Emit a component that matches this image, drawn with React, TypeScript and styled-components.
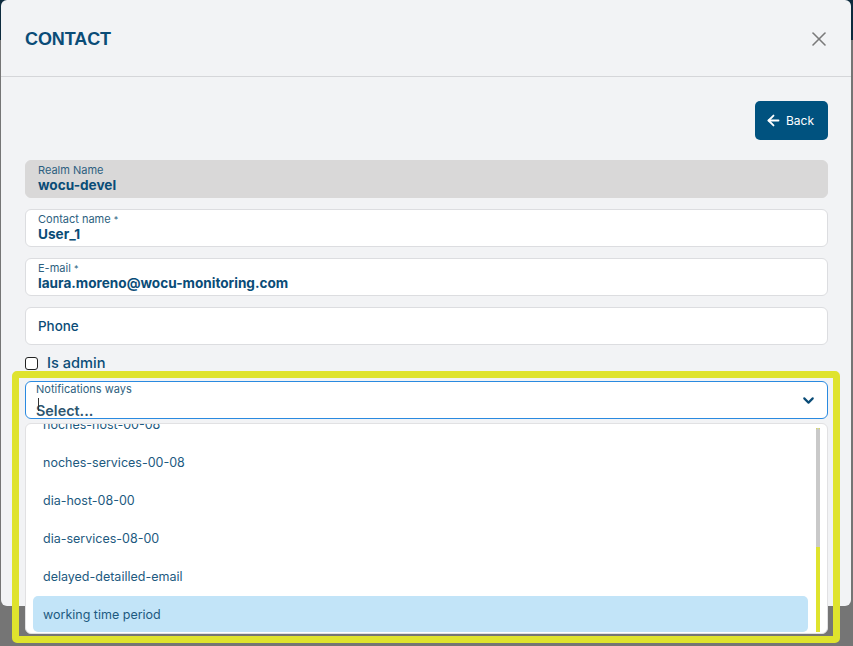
import React from "react";
import styled, { createGlobalStyle } from "styled-components";
import { ArrowLeft, ChevronDown, X } from "lucide-react";

const GlobalStyle = createGlobalStyle`
  html, body {
    margin: 0;
    padding: 0;
  }
  body {
    width: 853px;
    height: 646px;
    overflow: hidden;
    font-family: "Inter", "Liberation Sans", sans-serif;
  }
`;

const NAVY = "#0a4c77";

const options = [
  "noches-host-00-08",
  "noches-services-00-08",
  "dia-host-08-00",
  "dia-services-08-00",
  "delayed-detailled-email",
  "working time period",
];

export default function App() {
  return (
    <>
      <GlobalStyle />
      <Backdrop>
        <Modal>
          <Header>
            <Title>CONTACT</Title>
            <CloseButton aria-label="close">
              <X size={24} strokeWidth={1.6} />
            </CloseButton>
          </Header>
          <Body>
            <Actions>
              <BackButton>
                <ArrowLeft size={17} strokeWidth={2.6} />
                Back
              </BackButton>
            </Actions>
            <Form>
              <Field $disabled>
                <Label>Realm Name</Label>
                <Value>wocu-devel</Value>
              </Field>
              <Field>
                <Label>
                  Contact name <Req>*</Req>
                </Label>
                <Value>User_1</Value>
              </Field>
              <Field>
                <Label>
                  E-mail <Req>*</Req>
                </Label>
                <Value>laura.moreno@wocu-monitoring.com</Value>
              </Field>
              <Field $center>
                <Placeholder>Phone</Placeholder>
              </Field>
              <CheckRow>
                <Check />
                Is admin
              </CheckRow>
              <SelectWrap>
                <Select>
                  <SelectLabel>Notifications ways</SelectLabel>
                  <Caret />
                  <SelectValue>Select...</SelectValue>
                  <Chevron>
                    <ChevronDown size={17} strokeWidth={3} />
                  </Chevron>
                </Select>
                <Menu>
                  <MenuList>
                    {options.map((o, i) => (
                      <MenuItem key={o} $active={i === options.length - 1}>
                        {o}
                      </MenuItem>
                    ))}
                  </MenuList>
                  <ScrollTrack>
                    <ScrollThumb />
                  </ScrollTrack>
                </Menu>
              </SelectWrap>
            </Form>
          </Body>
        </Modal>
        <Highlight />
      </Backdrop>
    </>
  );
}

const Backdrop = styled.div`
  position: relative;
  width: 853px;
  height: 646px;
  background: linear-gradient(#0d2b3e 0 40px, #757575 40px);
  padding: 0 0 0 1px;
  box-sizing: border-box;
`;

const Modal = styled.div`
  width: 850px;
  height: 606px;
  background: #f2f3f5;
  border-radius: 6px;
  display: flex;
  flex-direction: column;
`;

const Header = styled.div`
  height: 77px;
  flex-shrink: 0;
  padding: 2px 20px 0 24px;
  box-sizing: border-box;
  border-bottom: 1px solid #d5d6d9;
  display: flex;
  align-items: center;
  justify-content: space-between;
`;

const Title = styled.h2`
  margin: 0;
  font-family: "Liberation Sans", Arial, sans-serif;
  font-size: 18px;
  font-weight: 700;
  color: ${NAVY};
  letter-spacing: -0.1px;
`;

const CloseButton = styled.button`
  border: 0;
  background: none;
  padding: 0;
  color: #7a7a7a;
  display: flex;
  cursor: pointer;
`;

const Body = styled.div`
  padding: 24px 23px 0 24px;
`;

const Actions = styled.div`
  display: flex;
  justify-content: flex-end;
`;

const BackButton = styled.button`
  width: 73px;
  height: 39px;
  border: 0;
  border-radius: 5px;
  background: #00527f;
  color: #fff;
  font-family: "Inter", sans-serif;
  font-size: 12px;
  display: flex;
  align-items: center;
  justify-content: center;
  gap: 4px;
  padding: 0 4px 0 0;
`;

const Form = styled.div`
  margin-top: 20px;
  display: flex;
  flex-direction: column;
  gap: 11px;
`;

const Field = styled.div<{ $disabled?: boolean; $center?: boolean }>`
  height: 38px;
  box-sizing: border-box;
  border-radius: 6px;
  border: 1px solid ${(p) => (p.$disabled ? "#d9d8d8" : "#dcdde0")};
  background: ${(p) => (p.$disabled ? "#d9d8d8" : "#fff")};
  padding: ${(p) => (p.$center ? "0 12px" : "3px 12px 0")};
  display: flex;
  flex-direction: column;
  justify-content: ${(p) => (p.$center ? "center" : "flex-start")};
`;

const Label = styled.div`
  font-size: 11px;
  line-height: 13px;
  color: #2d5f80;
`;

const Req = styled.span`
  font-size: 9px;
  vertical-align: top;
`;

const Value = styled.div`
  font-size: 13.6px;
  line-height: 17px;
  font-weight: 700;
  color: ${NAVY};
`;

const Placeholder = styled.div`
  font-size: 13.4px;
  font-weight: 500;
  color: ${NAVY};
`;

const CheckRow = styled.label`
  display: flex;
  align-items: center;
  gap: 9px;
  height: 14px;
  font-size: 14.6px;
  font-weight: 500;
  color: ${NAVY};
`;

const Check = styled.span`
  width: 11px;
  height: 11px;
  border: 1.5px solid #222;
  border-radius: 3px;
  background: #fff;
`;

const SelectWrap = styled.div`
  position: relative;
  z-index: 2;
`;

const Select = styled.div`
  position: relative;
  height: 38px;
  box-sizing: border-box;
  border: 1px solid #2a8ae0;
  border-radius: 6px;
  background: #fff;
  padding: 1px 10px 0;
`;

const SelectLabel = styled.div`
  font-size: 11px;
  line-height: 13px;
  color: #2d5f80;
`;

const Caret = styled.span`
  position: absolute;
  left: 12px;
  top: 16px;
  width: 1px;
  height: 13px;
  background: #333;
`;

const SelectValue = styled.div`
  margin-top: 7px;
  font-size: 14.4px;
  line-height: 16px;
  font-weight: 600;
  color: #2d5570;
`;

const Chevron = styled.span`
  position: absolute;
  right: 10px;
  top: 10px;
  color: ${NAVY};
  display: flex;
`;

const Menu = styled.div`
  position: absolute;
  top: 42px;
  left: 0;
  right: 0;
  height: 211px;
  box-sizing: border-box;
  background: #fff;
  border: 1px solid #e1e1e3;
  border-radius: 6px;
  overflow: hidden;
`;

const MenuList = styled.div`
  margin-top: -18px;
  padding: 0 19px 0 7px;
  display: flex;
  flex-direction: column;
  gap: 2px;
`;

const MenuItem = styled.div<{ $active?: boolean }>`
  height: 36px;
  display: flex;
  align-items: center;
  padding: 0 10px;
  border-radius: 5px;
  font-size: 12.5px;
  color: #1d5a80;
  background: ${(p) => (p.$active ? "#c2e4f8" : "transparent")};
`;

const ScrollTrack = styled.div`
  position: absolute;
  top: 4px;
  bottom: 1px;
  right: 7px;
  width: 4px;
  background: #dfe32d;
`;

const ScrollThumb = styled.div`
  height: 119px;
  background: #c9c9c9;
  border-radius: 2px 2px 0 0;
`;

const Highlight = styled.div`
  position: absolute;
  left: 12px;
  top: 371px;
  width: 828px;
  height: 272px;
  box-sizing: border-box;
  border: 7px solid #dfe32d;
  border-radius: 5px;
  pointer-events: none;
  z-index: 3;
`;
